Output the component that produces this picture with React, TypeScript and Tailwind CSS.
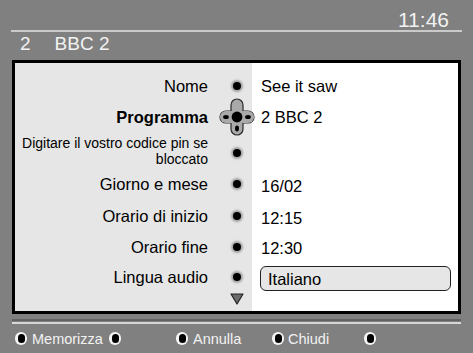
import React from "react";

function Dot() {
  return <span className="block w-[8px] h-[8px] rounded-full bg-black shadow-[0_0_2px_2px_#a4a4a4]" />;
}

function Joystick() {
  return (
    <svg width="40" height="38" viewBox="0 0 40 38" className="shrink-0">
      <rect x="3" y="13" width="34" height="12" rx="6" fill="#a9a9a9" stroke="#2a2a2a" strokeWidth="1.2" />
      <rect x="14" y="1" width="12" height="36" rx="6" fill="#a9a9a9" stroke="#2a2a2a" strokeWidth="1.2" />
      <rect x="3" y="13" width="34" height="12" rx="6" fill="#a9a9a9" />
      <circle cx="20" cy="19" r="5.4" fill="#000" />
      <ellipse cx="9" cy="19" rx="2.9" ry="2" fill="#000" />
      <ellipse cx="31" cy="19" rx="2.9" ry="2" fill="#000" />
      <ellipse cx="20" cy="30.5" rx="2" ry="2.9" fill="#000" />
    </svg>
  );
}

function Triangle() {
  return (
    <svg width="14" height="12" viewBox="0 0 14 12">
      <polygon points="1,1 13,1 7,11" fill="#6b6b6b" stroke="#222" strokeWidth="1.2" strokeLinejoin="round" />
    </svg>
  );
}

interface RowProps {
  h: string;
  label: React.ReactNode;
  marker?: React.ReactNode;
  value?: React.ReactNode;
  labelClass?: string;
}

function Row({ h, label, marker, value, labelClass }: RowProps) {
  return (
    <div className={`flex ${h}`}>
      <div className={`w-[193px] shrink-0 flex items-center justify-end text-right ${labelClass ?? ""}`}>{label}</div>
      <div className="w-[44px] shrink-0 flex">
        <div className="ml-[19px] w-[20px] flex justify-center items-center">{marker ?? <Dot />}</div>
      </div>
      <div className="flex-1 flex items-center pl-[9px]">{value}</div>
    </div>
  );
}

function FootBtn({ className }: { className?: string }) {
  return (
    <span className={`w-[12px] h-[13px] shrink-0 flex items-center justify-center ${className ?? ""}`}>
      <span className="w-[12px] h-[13px] rounded-full bg-[#f4f4f4] flex items-center justify-center">
        <span className="w-[7px] h-[9px] rounded-full bg-black" />
      </span>
    </span>
  );
}

export default function App() {
  return (
    <div
      className="w-[473px] h-[353px] bg-[#808080] flex flex-col overflow-hidden text-[#f2f2f2]"
      style={{ fontFamily: '"Liberation Sans", Arial, sans-serif' }}
    >
      <div className="h-[30px] flex justify-end pr-[24px] pt-[9px] text-[21px] leading-[21px]">11:46</div>
      <div className="mx-[11px] h-[2px] bg-[#cacaca]" />
      <div className="h-[28px] flex items-start pt-[3px] pl-[20px] text-[19px] leading-[18px]">
        <span>2</span>
        <span className="ml-[24px]">BBC 2</span>
      </div>

      <div className="mx-[12px] h-[254px] border-[3px] border-black bg-[linear-gradient(to_right,#e6e6e6_237px,#ffffff_237px)] flex flex-col text-black text-[16.5px] leading-[20px] pt-[8px]">
        <Row h="h-[30px]" label="Nome" value="See it saw" />
        <Row h="h-[32px]" label="Programma" labelClass="font-bold" marker={<Joystick />} value="2 BBC 2" />
        <Row
          h="h-[35px]"
          label={
            <span className="text-[14px] leading-[16px]">
              Digitare il vostro codice pin se
              <br />
              bloccato
            </span>
          }
          marker={
            <span className="pt-[4px]">
              <Dot />
            </span>
          }
        />
        <Row h="h-[32px]" label="Giorno e mese" value={<span className="pt-[4px]">16/02</span>} />
        <Row h="h-[31px]" label="Orario di inizio" value={<span className="pt-[4px]">12:15</span>} />
        <Row h="h-[31px]" label="Orario fine" value={<span className="pt-[3px]">12:30</span>} />
        <div className="flex h-[30px]">
          <div className="w-[193px] shrink-0 flex items-center justify-end">Lingua audio</div>
          <div className="w-[44px] shrink-0 flex">
            <div className="ml-[19px] w-[20px] flex justify-center items-center">
              <Dot />
            </div>
          </div>
          <div className="flex-1 flex items-center pl-[8px] pr-[7px] pt-[3px]">
            <div className="w-full h-[25px] rounded-[6px] border-[1.5px] border-[#222] bg-[#e6e6e6] flex items-center pl-[7px]">
              Italiano
            </div>
          </div>
        </div>
        <div className="flex flex-1">
          <div className="w-[193px] shrink-0" />
          <div className="w-[44px] shrink-0 flex">
            <div className="ml-[19px] w-[20px] flex justify-center items-start pt-[1px]">
              <Triangle />
            </div>
          </div>
        </div>
      </div>

      <div className="mt-[5px] mx-[12px] h-[2px] bg-[#626262]" />
      <div className="mt-[1px] mx-[12px] h-[2px] bg-[#d6d6d6]" />

      <div className="flex items-center h-[29px] text-[14.5px] leading-[16px] text-[#f2f2f2]">
        <FootBtn className="ml-[15px]" />
        <span className="ml-[5px] w-[77px]">Memorizza</span>
        <FootBtn />
        <FootBtn className="ml-[55px]" />
        <span className="ml-[5px] w-[79px]">Annulla</span>
        <FootBtn />
        <span className="ml-[4px] w-[76px]">Chiudi</span>
        <FootBtn />
      </div>
    </div>
  );
}
